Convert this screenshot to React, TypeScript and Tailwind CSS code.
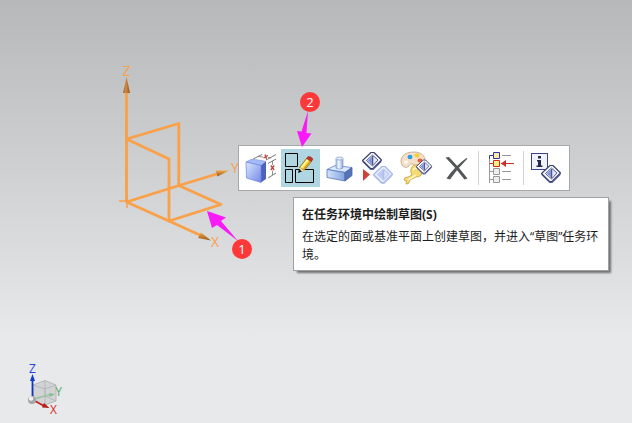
import React from "react";

function Diamond({ x, y, faded = false }: { x: number; y: number; faded?: boolean }) {
  const edge = faded ? "#a9b8e6" : "#3b4068";
  return (
    <g transform={`translate(${x} ${y})`} strokeLinejoin="round">
      <path d="M-9.500 -1L-1.500 8H1.500L9.500 -1V1L1.500 9H-1.500L-9.500 1Z" fill={faded ? "#bccaf2" : "#5563a8"} />
      <path d="M-9.500 -.5L-1 -8.500H2L9.500 -1L1 7.500H-1.500Z" fill={faded ? "#e3eafb" : "#f3f5fc"} stroke={edge} strokeWidth={1.1} />
      <path d="M-5.500 -.5L0.500 -6L6 -1L0.500 5Z" fill={faded ? "#d3dff9" : "#dfe5fb"} stroke={edge} strokeWidth="0.8" />
      <path d="M0.500 -5V4L-4.200 -.5Z" fill={faded ? "#b9c8f3" : "#8397e3"} />
      <path d="M0.700 -5V4" stroke={edge} strokeWidth="1" />
    </g>
  );
}

function BlockIcon() {
  return (
    <svg viewBox="0 0 39 38" className="size-full" fill="none">
      <defs>
        <linearGradient id="front" x1="0" y1="0" x2="1" y2="1">
          <stop stopColor="#dbe7ff" />
          <stop offset="1" stopColor="#7388e6" />
        </linearGradient>
      </defs>
      <path d="M11 10L20 5.500M24 11L34 5.500M26 14.500L34 10M26 29L34 24" stroke="#555" strokeWidth="0.8" />
      <path d="M16 7.500L29 9M30.500 12V26" stroke="#666" strokeWidth="0.7" />
      <path d="M4 13L9 10.500Q13 10 24 12.500L19 16.500Z" fill="#a4bbf6" stroke="#6f8be0" strokeWidth="0.6" />
      <path d="M19 16.500L24 12.500V30L19 33.500Z" fill="#4c60bd" />
      <path d="M4 13L19 16.500V33.500L4.500 29Z" fill="url(#front)" stroke="#6a84de" strokeWidth="0.7" />
      <rect x="21" y="5" width="5" height="5" fill="#fff" />
      <rect x="28" y="16" width="5" height="5.500" fill="#fff" />
      <path d="M21.500 9L26 6.500M23 5.500L24.500 10M28.800 16.500L32.200 21M32.200 16.500L28.800 21" stroke="#bf4038" strokeWidth="1.3" />
    </svg>
  );
}

function SketchIcon() {
  return (
    <svg viewBox="0 0 39 38" className="size-full" fill="none">
      <path d="M4.500 4.500H16.500V17.500H4.500ZM4.500 20.500H11.500V33.500H4.500ZM14.500 20.500H32.500V33.500H14.500Z" stroke="#000" />
      <path d="M18.500 18.500L25.500 9.500L30.500 12.500L23 21.500Z" fill="#f9dd3a" stroke="#6e5410" strokeWidth="0.7" />
      <path d="M20.500 18.500L27 10.500" stroke="#fff6b0" strokeWidth="1.5" />
      <path d="M22.500 20.500L29.500 12" stroke="#e09a18" strokeWidth="1.5" />
      <path d="M25.500 9.500L27 7.500Q30 7 32 10L30.500 12.500Z" fill="#c7312a" stroke="#802a20" strokeWidth="0.5" />
      <path d="M18.500 18.500L23 21.500L19 23Z" fill="#f3ddb4" />
      <path d="M17 24L18 20L21 22.500Z" fill="#111" />
    </svg>
  );
}

function ExtrudeIcon() {
  return (
    <svg viewBox="0 0 39 38" className="size-full" fill="none" strokeLinejoin="round">
      <defs>
        <linearGradient id="cyl">
          <stop stopColor="#a3bbe4" />
          <stop offset="0.4" stopColor="#f1f7ff" />
          <stop offset="1" stopColor="#8ea8d6" />
        </linearGradient>
        <linearGradient id="base">
          <stop stopColor="#d2e3fc" />
          <stop offset="1" stopColor="#83a3de" />
        </linearGradient>
      </defs>
      <path d="M7 20.500L15 16.500L32 18.500L25 23.500Z" fill="#dae8fd" stroke="#6482c2" strokeWidth="0.8" />
      <path d="M7 20.500L25 23.500V32L7 28.500Z" fill="url(#base)" stroke="#5573b6" strokeWidth="0.8" />
      <path d="M25 23.500L32 18.500V26.500L25 32Z" fill="#5673b8" stroke="#4663a8" strokeWidth="0.8" />
      <path d="M16 9.500V19Q19.500 21.500 23 19V9.500Z" fill="url(#cyl)" stroke="#7e9ad0" strokeWidth="0.7" />
      <ellipse cx="19.500" cy="9.500" rx="3.500" ry="1.500" fill="#e3effd" stroke="#7e9ad0" strokeWidth="0.7" />
    </svg>
  );
}

function ReplaceIcon() {
  return (
    <svg viewBox="0 0 39 38" className="size-full">
      <Diamond x={13} y={12} />
      <Diamond x={24} y={26} faded />
      <path d="M4 20L11 25.500L4 32Z" fill="#cf4339" />
    </svg>
  );
}

function PaletteIcon() {
  return (
    <svg viewBox="0 0 39 38" className="size-full">
      <path d="M3 12C3 6 9 3 16 3C23 3 27.500 7 27 12C26 18 18 18 16 16C14 14 12 15 11 17C8 20 3 18 3 12Z" fill="#f4e0c8" stroke="#c0a382" strokeWidth="0.8" />
      <ellipse cx="12" cy="8" rx="2.500" ry="2.200" fill="#2a9fe6" />
      <ellipse cx="19" cy="6.500" rx="2.500" ry="2" fill="#f3cf2e" />
      <ellipse cx="22" cy="11.500" rx="2.500" ry="2" fill="#e5603e" />
      <ellipse cx="8" cy="13" rx="2" ry="1.500" fill="#fffaf4" />
      <path d="M13 20Q14 15 20 16L24 21Q25 28 18 28L12 31Q11 36 8 35L8.500 32L6 31Q6 28 10 28L14 26Q12 23 13 20Z" fill="#f6da72" stroke="#c5a13c" strokeWidth="0.8" />
      <path d="M15 21Q17 18 19 20M10 31L18 26" stroke="#fff6c4" strokeWidth="1.6" fill="none" />
      <g transform="translate(26 18) scale(0.82)">
        <Diamond x={0} y={0} />
      </g>
    </svg>
  );
}

function DeleteIcon() {
  return (
    <svg viewBox="0 0 39 38" className="size-full" fill="#555858">
      <path d="M8.500 8.500L12 8Q22 18 30.500 29.500L27.500 30.500Q18 18 8.500 8.500Z" />
      <path d="M29.500 9L30.500 9.500Q21 19 13 30.500L9.500 29.500Q18 17 29.500 9Z" />
    </svg>
  );
}

function TreeIcon() {
  return (
    <svg viewBox="0 0 39 38" className="size-full" fill="none">
      <path d="M7.500 10V34M7.500 22.500H11M7.500 30.500H11M20 6.500H29M20 22.500H29M20 30.500H29" stroke="#999" />
      <path d="M7.500 10V6.500H11" stroke="#3436a3" />
      <path d="M7.500 14.500H11M19 14.500H32" stroke="#c9302b" />
      <path d="M19 14.500L24 11V18Z" fill="#cd2d2b" />
      <path d="M11.500 3.500H17.500V9.500H11.500Z" fill="#f9eda0" stroke="#3436a3" />
      <path d="M11.500 11.500H17.500V17.500H11.500Z" fill="#ffed7c" stroke="#d22c24" />
      <path d="M11.500 19.500H17.500V25.500H11.500ZM11.500 27.500H17.500V33.500H11.500Z" fill="#eee" stroke="#999" />
    </svg>
  );
}

function InfoIcon() {
  return (
    <svg viewBox="0 0 39 38" className="size-full">
      <rect x="4.500" y="4.500" width="16" height="16" fill="#f0f2ff" stroke="#3b4288" />
      <path d="M11 7H14V9.500H11ZM10 11H14V16.500H15.500V18H9.500V16.500H11V12.500H10Z" fill="#262944" />
      <Diamond x={24} y={25} />
    </svg>
  );
}

function Tool({ label, active = false, children }: { label: string; active?: boolean; children: React.ReactNode }) {
  return (
    <button type="button" aria-label={label} className={`h-[38px] w-[39px] ${active ? "bg-[#afd6e1]" : "bg-white"}`}>
      {children}
    </button>
  );
}

function Separator() {
  return <span className="mr-[3px] ml-[2px] h-[34px] w-px self-center bg-[#d3d3d3]" />;
}

function DatumCsys() {
  return (
    <svg width="140" height="200" viewBox="105 60 140 200" className="absolute top-[60px] left-[105px]" fill="none">
      <defs>
        <linearGradient id="coneZ">
          <stop stopColor="#a35d20" />
          <stop offset="0.4" stopColor="#d08a45" />
          <stop offset="1" stopColor="#93541f" />
        </linearGradient>
        <linearGradient id="coneXY" x1="0" y1="0" x2="0" y2="1">
          <stop stopColor="#f0a64e" />
          <stop offset="1" stopColor="#985a16" />
        </linearGradient>
      </defs>
      <g stroke="#f9a049" strokeWidth="2.8" strokeLinejoin="round">
        <path d="M126.500 92V202L169 221L202 236M126.500 202L179 185.500L220 173" />
        <path d="M126.500 139L178.800 123.500V185.500L221 204.500L169 221V159Z" />
        <path d="M119 201H131M127 195V208" strokeWidth="1.500" />
      </g>
      <path d="M126.500 77L130 93H123Z" fill="url(#coneZ)" />
      <path d="M229 170.500L215.500 170.500L217.500 176.500Z" fill="url(#coneXY)" />
      <path d="M211 240.500L201 232.500L198 238Z" fill="url(#coneXY)" />
      <g fill="#f9a049" className="font-['Open_Sans',sans-serif] text-[14px]" textAnchor="middle">
        <text x="126.500" y="76">Z</text>
        <text x="235" y="173">Y</text>
        <text x="215" y="247">X</text>
      </g>
    </svg>
  );
}

function ViewTriad() {
  return (
    <svg width="50" height="63" viewBox="20 360 50 63" className="absolute bottom-0 left-5" fill="none">
      <path d="M33 385L45 380.500L56 385V401L45 405L33 401Z" fill="#d2d3d4" />
      <path d="M33 385L45 380.500L56 385V401L45 405L33 401ZM33 385L45 389L56 385M45 389V405M45 380.500V396L33 400M45 396L56 401" stroke="#b6b8b9" />
      <path d="M36 398L52 394.500" stroke="#9ac6a3" strokeWidth="1.500" />
      <path d="M49 393L55 394L50 397Z" fill="#86bd92" />
      <path d="M32.500 397V380" stroke="#1635bd" strokeWidth="1.800" />
      <path d="M32.500 374L35 381H30Z" fill="#123bc8" />
      <path d="M35 401L44 406" stroke="#c62323" strokeWidth="1.800" />
      <path d="M49.500 408L42 407.500L44 403Z" fill="#b61b1b" />
      <circle cx="32" cy="400" r="4" fill="#a5a5a5" />
      <circle cx="31" cy="398.500" r="2.300" fill="#f1f1f1" />
      <g className="font-['Open_Sans',sans-serif] text-[12px]" textAnchor="middle">
        <text x="32.500" y="373" fill="#1b43e8">Z</text>
        <text x="58.500" y="396" fill="#55a866">Y</text>
        <text x="53.500" y="414" fill="#d62d2d">X</text>
      </g>
    </svg>
  );
}

function Badge({ value, className }: { value: number; className: string }) {
  return (
    <span className={`absolute flex size-5 items-center justify-center rounded-full bg-[#fd3838] font-['Open_Sans',sans-serif] text-[13px] leading-5 text-white ${className}`}>
      {value}
    </span>
  );
}

export default function App() {
  return (
    <main className="relative min-h-screen overflow-hidden bg-linear-to-b from-[#b7b8ba] via-[#cfd0d2] via-40% to-[#e7e9ea] to-80% text-black">
      <DatumCsys />
      <ViewTriad />

      <div role="toolbar" aria-label="快捷工具条" className="absolute top-[145px] left-[238px] flex border border-[#a7a8aa] bg-white p-[3px]">
        <Tool label="编辑参数"><BlockIcon /></Tool>
        <Tool label="在任务环境中绘制草图" active><SketchIcon /></Tool>
        <Tool label="拉伸"><ExtrudeIcon /></Tool>
        <Tool label="替换特征"><ReplaceIcon /></Tool>
        <Tool label="编辑显示"><PaletteIcon /></Tool>
        <Tool label="删除"><DeleteIcon /></Tool>
        <Separator />
        <Tool label="设为当前特征"><TreeIcon /></Tool>
        <Separator />
        <Tool label="信息"><InfoIcon /></Tool>
      </div>

      <div role="tooltip" className="absolute top-[197px] left-[293px] w-[316px] border border-[#a0a1a3] bg-white px-2 pt-2 pb-1.5 font-['Open_Sans','Noto_Sans_CJK_SC',sans-serif] text-xs leading-[18px] text-[#1c1c1c] shadow-[3px_3px_2px_-1px_#6f7072]">
        <h1 className="font-bold">在任务环境中绘制草图(S)</h1>
        <p className="mt-1">在选定的面或基准平面上创建草图，并进入“草图”任务环境。</p>
      </div>

      <svg width="120" height="140" viewBox="200 105 120 140" className="absolute top-[105px] left-[200px]" fill="#f91bf7">
        <path d="M207 211L226 217.500L221 221L238 241L217 225L212 228Z" />
        <path d="M308 111L306.500 133L311.500 133.500L302 147L297 131L301.500 131.500Z" />
      </svg>
      <Badge value={1} className="top-[239px] left-[232px]" />
      <Badge value={2} className="top-[92px] left-[300px]" />
    </main>
  );
}
